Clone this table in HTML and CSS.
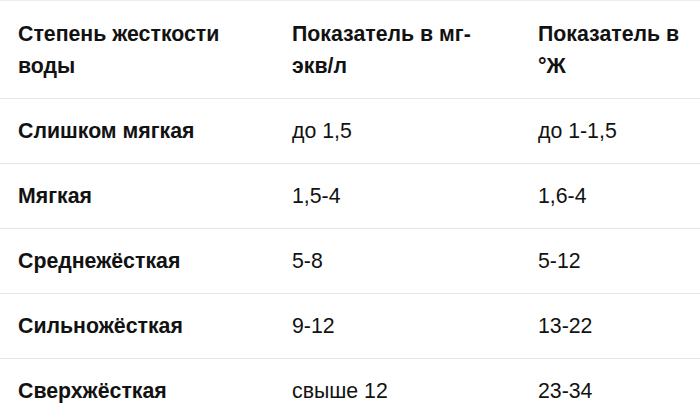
FILE: index.html
```html
<!DOCTYPE html>
<html lang="ru">
<head>
<meta charset="utf-8">
<link rel="stylesheet" href="styles.css">
</head>
<body>
<div class="table">
  <div class="row head">
    <div class="cell">Степень жесткости воды</div>
    <div class="cell">Показатель в мг-<span class="nw">экв/л</span></div>
    <div class="cell">Показатель в °Ж</div>
  </div>
  <div class="row">
    <div class="cell name">Слишком мягкая</div>
    <div class="cell">до 1,5</div>
    <div class="cell">до 1-1,5</div>
  </div>
  <div class="row">
    <div class="cell name">Мягкая</div>
    <div class="cell">1,5-4</div>
    <div class="cell">1,6-4</div>
  </div>
  <div class="row">
    <div class="cell name">Среднежёсткая</div>
    <div class="cell">5-8</div>
    <div class="cell">5-12</div>
  </div>
  <div class="row">
    <div class="cell name">Сильножёсткая</div>
    <div class="cell">9-12</div>
    <div class="cell">13-22</div>
  </div>
  <div class="row">
    <div class="cell name">Сверхжёсткая</div>
    <div class="cell">свыше 12</div>
    <div class="cell">23-34</div>
  </div>
</div>
</body>
</html>
```
FILE: styles.css
```css
html, body {
  margin: 0;
  padding: 0;
  background: #ffffff;
}
body {
  font-family: "Liberation Sans", Arial, sans-serif;
  font-size: 21.3px;
  color: #121212;
}
.table {
  width: 700px;
  border-top: 1px solid #ececec;
}
.row {
  display: grid;
  grid-template-columns: 292px 246px 1fr;
  border-bottom: 1px solid #e6e6e6;
  padding: 16px 0;
  line-height: 32px;
}
.row.head {
  padding: 17px 0 16px;
  font-weight: bold;
}
.cell {
  padding-right: 18px;
}
.cell:first-child {
  padding-left: 18px;
}
.name {
  font-weight: bold;
}
.nw {
  white-space: nowrap;
}
```
